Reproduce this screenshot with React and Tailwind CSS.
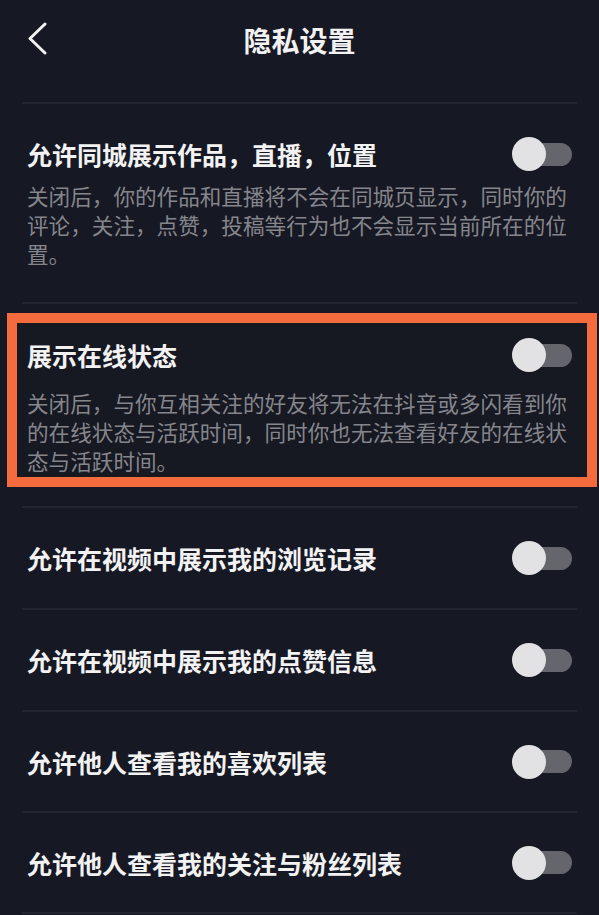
import React from "react";

const font = { fontFamily: '"Noto Sans CJK SC", "Noto Sans", sans-serif' };

function Toggle() {
  return (
    <div className="relative w-[60px] h-[34px] shrink-0">
      <div className="absolute right-0 top-[5.5px] h-[23px] w-[52px] rounded-full bg-[#65666d]" />
      <div className="absolute left-0 top-0 h-[34px] w-[34px] rounded-full bg-[#e2e2e5]" />
    </div>
  );
}

function Divider() {
  return <div className="mx-[22px] h-[2px] bg-[#232530]" />;
}

function SimpleRow({ title, h }) {
  return (
    <>
      <div className={`${h} flex items-center justify-between pl-[27px] pr-[27px]`}>
        <div className="text-[25px] leading-[34px] font-bold text-[#f2f2f3]">{title}</div>
        <Toggle />
      </div>
      <Divider />
    </>
  );
}

export default function App() {
  return (
    <div style={font} className="w-[599px] h-[915px] overflow-hidden bg-[#161823]">
      {/* Header */}
      <div className="relative h-[80px] flex items-center justify-center">
        <svg className="absolute left-[26px] top-[22px]" width="24" height="34" viewBox="0 0 24 34">
          <path d="M19 2 L4 16.5 L19 31" fill="none" stroke="#f2f2f3" strokeWidth="3" strokeLinecap="round" strokeLinejoin="round" />
        </svg>
        <div className="text-[28px] leading-[40px] font-bold text-[#f2f2f3]">隐私设置</div>
      </div>
      <div className="h-[22px]" />
      <Divider />

      {/* Section 1 */}
      <div className="pl-[27px] pr-[27px] pt-[33px] pb-[34px]">
        <div className="flex items-center justify-between">
          <div className="text-[25px] leading-[34px] font-bold text-[#f2f2f3]">允许同城展示作品，直播，位置</div>
          <Toggle />
        </div>
        <div className="mt-[10px] w-[548px] text-[21.6px] leading-[29px] text-[#85868c]">
          关闭后，你的作品和直播将不会在同城页显示，同时你的评论，关注，点赞，投稿等行为也不会显示当前所在的位置。
        </div>
      </div>
      <Divider />

      {/* Highlighted section */}
      <div className="mt-[9px] ml-[7px] mr-[2px] border-[10px] border-[#f46c3d] bg-[#161822] pl-[10px] pr-[15px] pt-[15px] pb-[2px]">
        <div className="flex items-center justify-between">
          <div className="text-[25px] leading-[34px] font-bold text-[#f2f2f3]">展示在线状态</div>
          <Toggle />
        </div>
        <div className="mt-[16px] w-[548px] text-[21.6px] leading-[29px] text-[#85868c]">
          关闭后，与你互相关注的好友将无法在抖音或多闪看到你的在线状态与活跃时间，同时你也无法查看好友的在线状态与活跃时间。
        </div>
      </div>
      <div className="h-[19px]" />
      <Divider />

      <SimpleRow h="h-[100px]" title="允许在视频中展示我的浏览记录" />
      <SimpleRow h="h-[100px]" title="允许在视频中展示我的点赞信息" />
      <SimpleRow h="h-[99px]" title="允许他人查看我的喜欢列表" />
      <SimpleRow h="h-[99px]" title="允许他人查看我的关注与粉丝列表" />
    </div>
  );
}
